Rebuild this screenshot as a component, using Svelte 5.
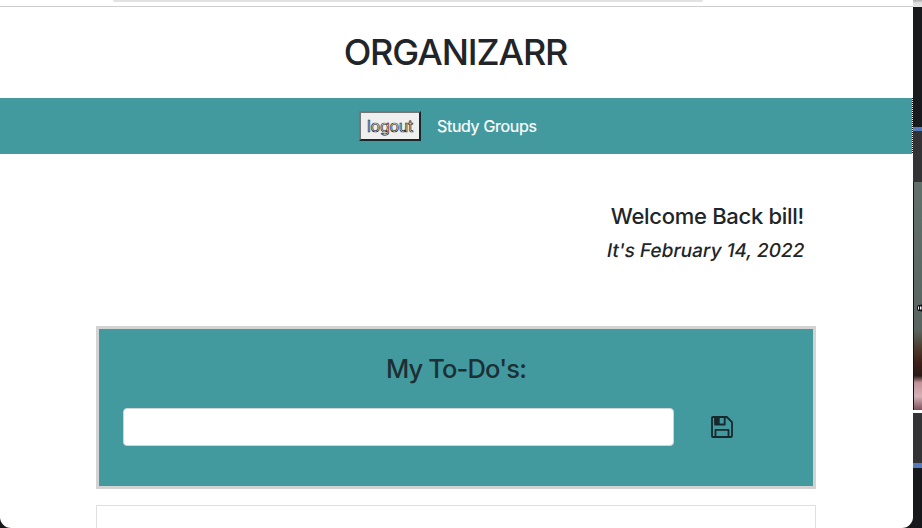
<script>
  let todo = $state('');
</script>

<div class="desktop">
  <div class="window">
    <div class="toolbar"><div class="address"></div></div>
    <header><h1><span>ORGANIZARR</span></h1></header>
    <nav>
      <button type="button"><span>logout</span></button>
      <a href="#groups">Study Groups</a>
    </nav>
    <main>
      <section class="welcome">
        <h4>Welcome Back bill!</h4>
        <h5>It's February 14, 2022</h5>
      </section>
      <section class="todos">
        <h3>My To-Do's:</h3>
        <form>
          <input type="text" aria-label="To-do" bind:value={todo} />
          <svg width="22" height="22" viewBox="0 0 22 22" fill="none" stroke="#17292d" stroke-width="1.8" stroke-linejoin="round">
            <path d="M1.9 1H15.8L21 6.2V20.1Q21 21 20.1 21H1.9Q1 21 1 20.1V1.9Q1 1 1.9 1Z" />
            <path d="M4 1V8.5H13.7V1M4.5 21V13.8H17.5V21" />
            <path d="M4 1H8.7V8.5H4Z" fill="#17292d" stroke="none" />
          </svg>
        </form>
      </section>
      <section class="list"></section>
    </main>
  </div>
  <aside>
    <i class="top"></i>
    <i class="dark"></i>
    <i class="blue"></i>
    <i class="gray"></i>
    <i class="camera"><svg width="6" height="8" viewBox="0 0 6 8"><path d="M6 0L3 1H1L0 3V5L1 7H3L6 8Z" fill="#111" /><path d="M1 2.5H2V5.5H1ZM3 2.5H4.5V5.5H3Z" fill="#f6f2ff" /></svg></i>
    <i class="white"></i>
    <i class="gray second"></i>
    <i class="blue second"></i>
    <i class="end"></i>
  </aside>
</div>

<style>
  * { box-sizing: border-box; }
  .desktop {
    display: flex;
    width: 922px;
    height: 528px;
    overflow: hidden;
    background: #17181b;
    color: #212529;
    font-family: Inter, "Liberation Sans", sans-serif;
  }
  .window {
    width: 913px;
    height: 528px;
    overflow: hidden;
    background: #fff;
    border-radius: 0 0 11px 11px;
  }
  .toolbar { height: 7px; border-bottom: 1px solid #cdcdcd; padding-left: 113px; }
  .address { width: 590px; height: 2px; background: #e2e2e2; border-radius: 0 0 8px 8px; }
  header { height: 91px; display: flex; justify-content: center; align-items: center; padding: 0 2px 1px 0; }
  h1, h3, h4, h5 { margin: 0; font-weight: 500; white-space: nowrap; }
  h1 { font-size: 36px; line-height: 44px; letter-spacing: -1.1px; }
  nav {
    width: 913px;
    height: 56px;
    background:
      repeating-linear-gradient(#111 0 1px, #fff 1px 2px) right / 1px 100% no-repeat,
      #429a9f;
    display: flex;
    align-items: center;
    padding-left: 359px;
    gap: 16px;
  }
  button {
    width: 62px;
    height: 30px;
    padding: 0;
    background: #efefef;
    border: 2px solid;
    border-color: #767676 #17272a #17272a #767676;
    font: 400 16px/24px Inter, sans-serif;
    color: #f6f6f6;
    -webkit-text-stroke: 0.7px #222;
  }
  button span { letter-spacing: -0.25px; }
  a { color: #fff; text-decoration: none; font-size: 16px; letter-spacing: -0.31px; -webkit-text-stroke: 0.2px; }
  main { width: 720px; margin-left: 96px; }
  .welcome { height: 172px; padding: 48px 12px 0 0; text-align: right; }
  h4 { font-size: 22px; line-height: 29px; letter-spacing: -0.29px; }
  h5 {
    width: max-content;
    margin: 8px 0 0 auto;
    font-size: 19px;
    line-height: 24px;
    letter-spacing: 0;
    transform: skewX(-10deg);
  }
  .todos { height: 163px; border: 3px solid #d3d3d3; background: #429a9f; padding: 24px; }
  h3 { font-size: 25.5px; line-height: 32px; text-align: center; letter-spacing: -0.85px; color: #1d2f34; }
  form { display: flex; align-items: center; gap: 37px; margin-top: 23px; }
  input { width: 551px; height: 38px; border: 1px solid #ced4da; border-radius: 4px; background: #fff; padding: 6px 12px; }
  .list { height: 40px; margin-top: 16px; border: 1px solid #dfdfdf; }
  aside { width: 9px; display: flex; flex-direction: column; }
  i { display: block; flex-shrink: 0; line-height: 0; }
  .top { height: 7px; background: linear-gradient(#aaa, #ddd 40%, #e5e5e5); }
  .dark { height: 120px; background: #191a1d; }
  .blue { height: 4px; background: #557bb9; }
  .gray { height: 51px; background: #333335; }
  .camera {
    height: 228px;
    padding: 122px 0 0 3px;
    border-left: 1px solid #111;
    background: linear-gradient(#62706c 0, #58645f 65%, #4c3c2d 73%, #3c211a 79%, #291a18 85%, #bf9299 88%, #d5b1b8 94%, #79515a 100%);
  }
  .white { height: 3px; background: #fff; }
  .gray.second { height: 50px; }
  .blue.second { height: 5px; }
  .end { height: 60px; background: #17181b; }
</style>
